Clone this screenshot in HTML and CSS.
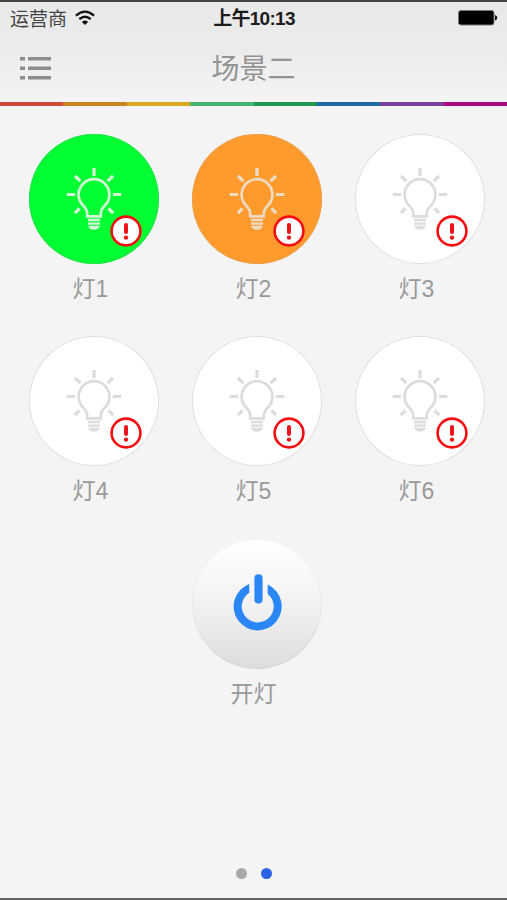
FILE: index.html
```
<!DOCTYPE html>
<html lang="zh">

<head>
    <meta charset="utf-8">
    <title>场景二</title>
    <link rel="stylesheet" href="styles.css">
</head>

<body>
    <svg class="defs">
        <symbol id="bulb" viewBox="0 0 130 130">
            <g fill="none" stroke="currentColor" stroke-width="3.2">
                <path d="M58.2 82.3V79C58.2 76 56.8 74.6 54 71.4A15.4 15.4 0 1 1 76 71.4C73.2 74.6 71.8 76 71.8 79V82.3Z" stroke-width="2.7" />
                <path d="M65 34v8M37.8 60.5h8.3M83.9 60.5h8.3M46 42l5.4 5.2M84 42l-5.4 5.2M45.8 79.2l4.7-4.7M84.2 79.2l-4.7-4.7" />
                <path d="M59 86h12M59 89.6h12" stroke-width="2.4" />
            </g>
            <path d="M59 91.8h12q-1.4 4-6 4t-6-4z" fill="currentColor" />
        </symbol>
        <symbol id="alert" viewBox="0 0 32 32">
            <circle cx="16" cy="16" r="14.4" fill="#fff" stroke="#f80c10" stroke-width="2.6" />
            <path d="M16 10v7" stroke="#ea141a" stroke-width="4" stroke-linecap="round" />
            <circle cx="16" cy="22.6" r="2.2" fill="#ea141a" />
        </symbol>
    </svg>

    <header class="header">
        <div class="status">
            <div class="carrier">
                <span>运营商</span>
                <svg class="wifi" viewBox="0 0 20 16">
                    <g fill="none" stroke="#111" stroke-width="2.3">
                        <path d="M.9 5.6Q10-2.4 19.1 5.6" />
                        <path d="M4.3 9.2Q10 4.2 15.7 9.2" />
                    </g>
                    <path d="M6.9 11.9Q10 9.2 13.1 11.9L10 15z" fill="#111" />
                </svg>
            </div>
            <div class="time">上午10:13</div>
            <svg class="battery" viewBox="0 0 40 16">
                <rect x=".5" y=".5" width="35.5" height="14.5" rx="2.5" fill="#000" stroke="#777" />
                <path d="M37 5q2.3.6 2.3 2.8T37 10.6z" fill="#111" />
            </svg>
        </div>
        <div class="navbar">
            <svg class="menu" viewBox="0 0 31 24">
                <path d="M0 2.8h5M8 2.8h23M0 12.3h5M8 12.3h23M0 21.7h5M8 21.7h23" stroke="#8d8d8d" stroke-width="3.6" />
            </svg>
            <h1>场景二</h1>
        </div>
        <div class="rainbow">
            <i class="red"></i><i class="orange"></i><i class="yellow"></i><i class="mint"></i>
            <i class="green"></i><i class="blue"></i><i class="purple"></i><i class="pink"></i>
        </div>
    </header>

    <main class="lamps">
        <div class="lamp">
            <div class="disc on-green"><svg class="icon"><use href="#bulb" /></svg><svg class="badge"><use href="#alert" /></svg></div>
            <p>灯1</p>
        </div>
        <div class="lamp">
            <div class="disc on-orange"><svg class="icon"><use href="#bulb" /></svg><svg class="badge"><use href="#alert" /></svg></div>
            <p>灯2</p>
        </div>
        <div class="lamp">
            <div class="disc"><svg class="icon"><use href="#bulb" /></svg><svg class="badge"><use href="#alert" /></svg></div>
            <p>灯3</p>
        </div>
        <div class="lamp">
            <div class="disc"><svg class="icon"><use href="#bulb" /></svg><svg class="badge"><use href="#alert" /></svg></div>
            <p>灯4</p>
        </div>
        <div class="lamp">
            <div class="disc"><svg class="icon"><use href="#bulb" /></svg><svg class="badge"><use href="#alert" /></svg></div>
            <p>灯5</p>
        </div>
        <div class="lamp">
            <div class="disc"><svg class="icon"><use href="#bulb" /></svg><svg class="badge"><use href="#alert" /></svg></div>
            <p>灯6</p>
        </div>
        <div class="lamp switch">
            <div class="disc power">
                <svg class="icon" viewBox="0 0 130 130" fill="#2a87f5">
                    <path d="M57.3 44.9A24 24 0 1 0 75.7 45.6V54.9A16 16 0 1 1 57.3 53.8Z" />
                    <rect x="62.4" y="35.2" width="8.2" height="29.3" rx="4" />
                </svg>
            </div>
            <p>开灯</p>
        </div>
    </main>

    <footer class="pager">
        <span class="dot"></span>
        <span class="dot active"></span>
    </footer>
</body>

</html>
```
FILE: styles.css
```
* {
    box-sizing: border-box;
}

body {
    margin: 0;
    height: 900px;
    display: flex;
    flex-direction: column;
    overflow: hidden;
    background: #f4f4f4;
    border-top: 2px solid #434343;
    border-bottom: 2px solid #626262;
    font-family: "Liberation Sans", "Noto Sans CJK SC", sans-serif;
}

svg {
    display: block;
}

.defs {
    position: absolute;
    width: 0;
    height: 0;
}

.header {
    height: 104px;
    display: flex;
    flex-direction: column;
    background: linear-gradient(#e9e9e9, #ebebeb 45%, #f5f5f5);
}

.status {
    height: 32px;
    padding: 0 9px 0 10px;
    display: grid;
    grid-template-columns: 1fr auto 1fr;
    align-items: center;
    font-size: 19px;
    line-height: 32px;
    color: #444;
}

.carrier {
    display: flex;
    align-items: center;
    gap: 8px;
}

.carrier span {
    padding-top: 3px;
    line-height: 29px;
}

.wifi {
    width: 20px;
    height: 16px;
}

.time {
    padding-top: 2px;
    line-height: 30px;
    font-size: 19px;
    font-weight: bold;
    letter-spacing: -0.7px;
    color: #1c1c1c;
}

.battery {
    width: 40px;
    height: 16px;
    justify-self: end;
}

.navbar {
    height: 68px;
    padding: 0 20px;
    display: grid;
    grid-template-columns: 31px 1fr 31px;
    align-items: center;
}

.menu {
    width: 31px;
    height: 24px;
}

h1 {
    margin: 0;
    padding-top: 3px;
    text-align: center;
    font-size: 28px;
    font-weight: 400;
    line-height: 40px;
    color: #939393;
}

.rainbow {
    height: 4px;
    display: grid;
    grid-template-columns: repeat(8, 1fr);
}

.red {
    background: #cf4a37;
}

.orange {
    background: #cc8420;
}

.yellow {
    background: #d8a91f;
}

.mint {
    background: #44b574;
}

.green {
    background: #219653;
}

.blue {
    background: #1c6ca0;
}

.purple {
    background: #7a3f98;
}

.pink {
    background: #a90a80;
}

.lamps {
    flex: 1;
    padding: 28px 22px 0 29px;
    display: grid;
    grid-template-columns: repeat(3, 130px);
    grid-auto-rows: 172px;
    column-gap: 33px;
    row-gap: 30.4px;
}

.switch {
    grid-column: 2;
}

.disc {
    position: relative;
    width: 130px;
    height: 130px;
    border-radius: 50%;
    background: #fff;
    box-shadow: inset 0 0 0 1px #dedede;
    color: #dcdcdc;
}

.on-green {
    background: #00ff32;
    box-shadow: inset 0 0 0 1px #28df4c;
    color: #d5f5d8;
}

.on-orange {
    background: #ff9b2d;
    box-shadow: inset 0 0 0 1px #e9a050;
    color: #ecdcc4;
}

.power {
    background: linear-gradient(#fff, #f2f2f2 50%, #dcdcdc);
    box-shadow: inset 0 0 0 1px rgba(0, 0, 0, 0.04);
}

.icon {
    width: 130px;
    height: 130px;
}

.badge {
    position: absolute;
    left: 80.5px;
    top: 80.7px;
    width: 32px;
    height: 32px;
}

.lamp p {
    margin: 8px 0 0;
    padding-right: 7px;
    text-align: center;
    font-size: 23px;
    line-height: 34px;
    color: #999;
}

.pager {
    height: 50px;
    display: flex;
    justify-content: center;
    gap: 14px;
    padding-top: 20px;
}

.dot {
    width: 11px;
    height: 11px;
    border-radius: 50%;
    background: #a9a9a9;
}

.active {
    background: #2b62e3;
}
```
